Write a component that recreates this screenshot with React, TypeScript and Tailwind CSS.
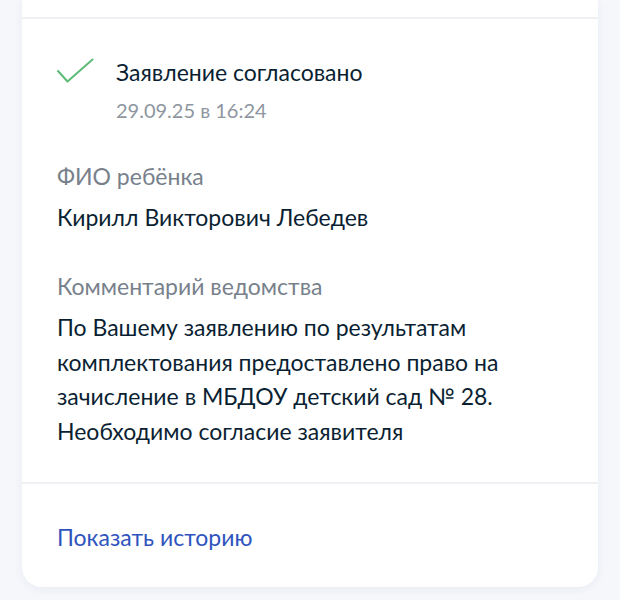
import { Fragment } from "react";

const font = { fontFamily: "Lato, 'Noto Sans', sans-serif" };

function CheckIcon() {
  return (
    <svg width="37" height="26" viewBox="0 0 37 26" fill="none" className="shrink-0">
      <path d="M1 13 L10.5 23.5 L35.5 1.5" stroke="#5dbb78" strokeWidth="2" strokeLinecap="round" strokeLinejoin="round" />
    </svg>
  );
}

const comment = [
  "По Вашему заявлению по результатам",
  "комплектования предоставлено право на",
  "зачисление в МБДОУ детский сад № 28.",
  "Необходимо согласие заявителя",
];

export default function App() {
  return (
    <div className="min-h-[600px] w-[620px] bg-[#f5f7fb] px-[22px] pb-[13px]" style={font}>
      <div className="bg-white rounded-b-[20px] shadow-[0_2px_10px_rgba(30,50,90,0.06)]">
        {/* top section (cut off) */}
        <div className="h-[19px] border-b-2 border-[#eef0f3]" />

        {/* Content */}
        <div className="px-[35px] pt-[36px] pb-[33px]">
          <div className="flex gap-[22px]">
            <div className="pt-[3px]">
              <CheckIcon />
            </div>
            <div>
              <div className="text-[23px] leading-[34px] text-[#0b1f33]">Заявление согласовано</div>
              <div className="text-[20px] leading-[28px] mt-[7px] text-[#8e969f]">29.09.25 в 16:24</div>
            </div>
          </div>

          <div className="mt-[37px] text-[23px] leading-[30px] text-[#78818b]">ФИО ребёнка</div>
          <div className="mt-[9px] text-[23px] leading-[34px] text-[#0b1f33]">Кирилл Викторович Лебедев</div>

          <div className="mt-[37px] text-[23px] leading-[30px] text-[#78818b]">Комментарий ведомства</div>
          <div className="mt-[9px] text-[23px] leading-[34.7px] text-[#0b1f33]">
            {comment.map((line, i) => (
              <Fragment key={i}>
                {line}
                {i < comment.length - 1 && <br />}
              </Fragment>
            ))}
          </div>
        </div>

        <div className="border-t-2 border-[#eef0f3] px-[35px] pt-[36px] pb-[33px]">
          <div className="text-[23px] leading-[34px] text-[#2f54bd]">Показать историю</div>
        </div>
      </div>
    </div>
  );
}
